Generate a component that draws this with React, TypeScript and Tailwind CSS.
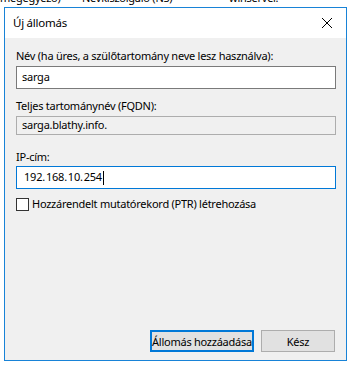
import React from "react";

export default function App() {
  const font = { fontFamily: '"Noto Sans", "Segoe UI", Arial, sans-serif' };
  return (
    <div className="w-[363px] h-[366px] bg-white text-black text-[11px] tracking-[-0.25px] relative overflow-hidden" style={font}>
      <div className="h-[7px] overflow-hidden relative">
        <div className="flex leading-[16px] -mt-[10px] whitespace-nowrap">
          <span className="w-[82px]">megegyező)</span>
          <span className="w-[147px]">Névkiszolgáló (NS)</span>
          <span>winserver.</span>
        </div>
      </div>
      <div className="ml-[4px] w-[343px] h-[354px] border border-[#1883d7] flex flex-col">
        <div className="h-[30px] bg-white flex items-center justify-between pl-[8px] pr-[10px]">
          <span className="leading-[16px] text-[11.5px]">Új állomás</span>
          <svg width="12" height="12" viewBox="0 0 12 12" className="mr-[3px]">
            <path d="M1 1 L11 11 M11 1 L1 11" stroke="#000" strokeWidth="1" />
          </svg>
        </div>
        <div className="flex-1 bg-[#f0f0f0] flex flex-col pl-[11px] pr-[10px]">
          <div className="mt-[10px] leading-[16px]">Név (ha üres, a szülőtartomány neve lesz használva):</div>
          <div className="mt-[2px] h-[23px] w-[320px] border border-[#7a7a7a] bg-white flex items-center pl-[5px]">sarga</div>
          <div className="mt-[9px] leading-[16px]">Teljes tartománynév (FQDN):</div>
          <div className="mt-[2px] h-[19px] w-[320px] border border-[#adadad] bg-[#f0f0f0] flex items-center pl-[5px]">sarga.blathy.info.</div>
          <div className="mt-[14px] leading-[16px]">IP-cím:</div>
          <div className="mt-[1px] h-[23px] w-[320px] border border-[#0078d7] bg-white flex items-center pl-[7px]">
            <span className="tracking-[-0.2px]">192.&#8202;168.&#8202;10.&#8202;254</span>
            <span className="inline-block w-[1px] h-[14px] bg-black ml-[1px]" />
          </div>
          <div className="mt-[8px] flex items-center h-[14px]">
            <div className="w-[13px] h-[13px] border border-[#333] bg-white" />
            <span className="ml-[3px] leading-[16px]">Hozzárendelt mutatórekord (PTR) létrehozása</span>
          </div>
          <div className="flex-1" />
          <div className="flex justify-end gap-[7px] mb-[8px] pr-[1px]">
            <div className="w-[104px] h-[22px] border-2 border-[#0078d7] bg-[#e1e1e1] flex items-center justify-center leading-none whitespace-nowrap">Állomás hozzáadása</div>
            <div className="w-[74px] h-[22px] border border-[#adadad] bg-[#e1e1e1] flex items-center justify-center leading-none">Kész</div>
          </div>
        </div>
      </div>
    </div>
  );
}
